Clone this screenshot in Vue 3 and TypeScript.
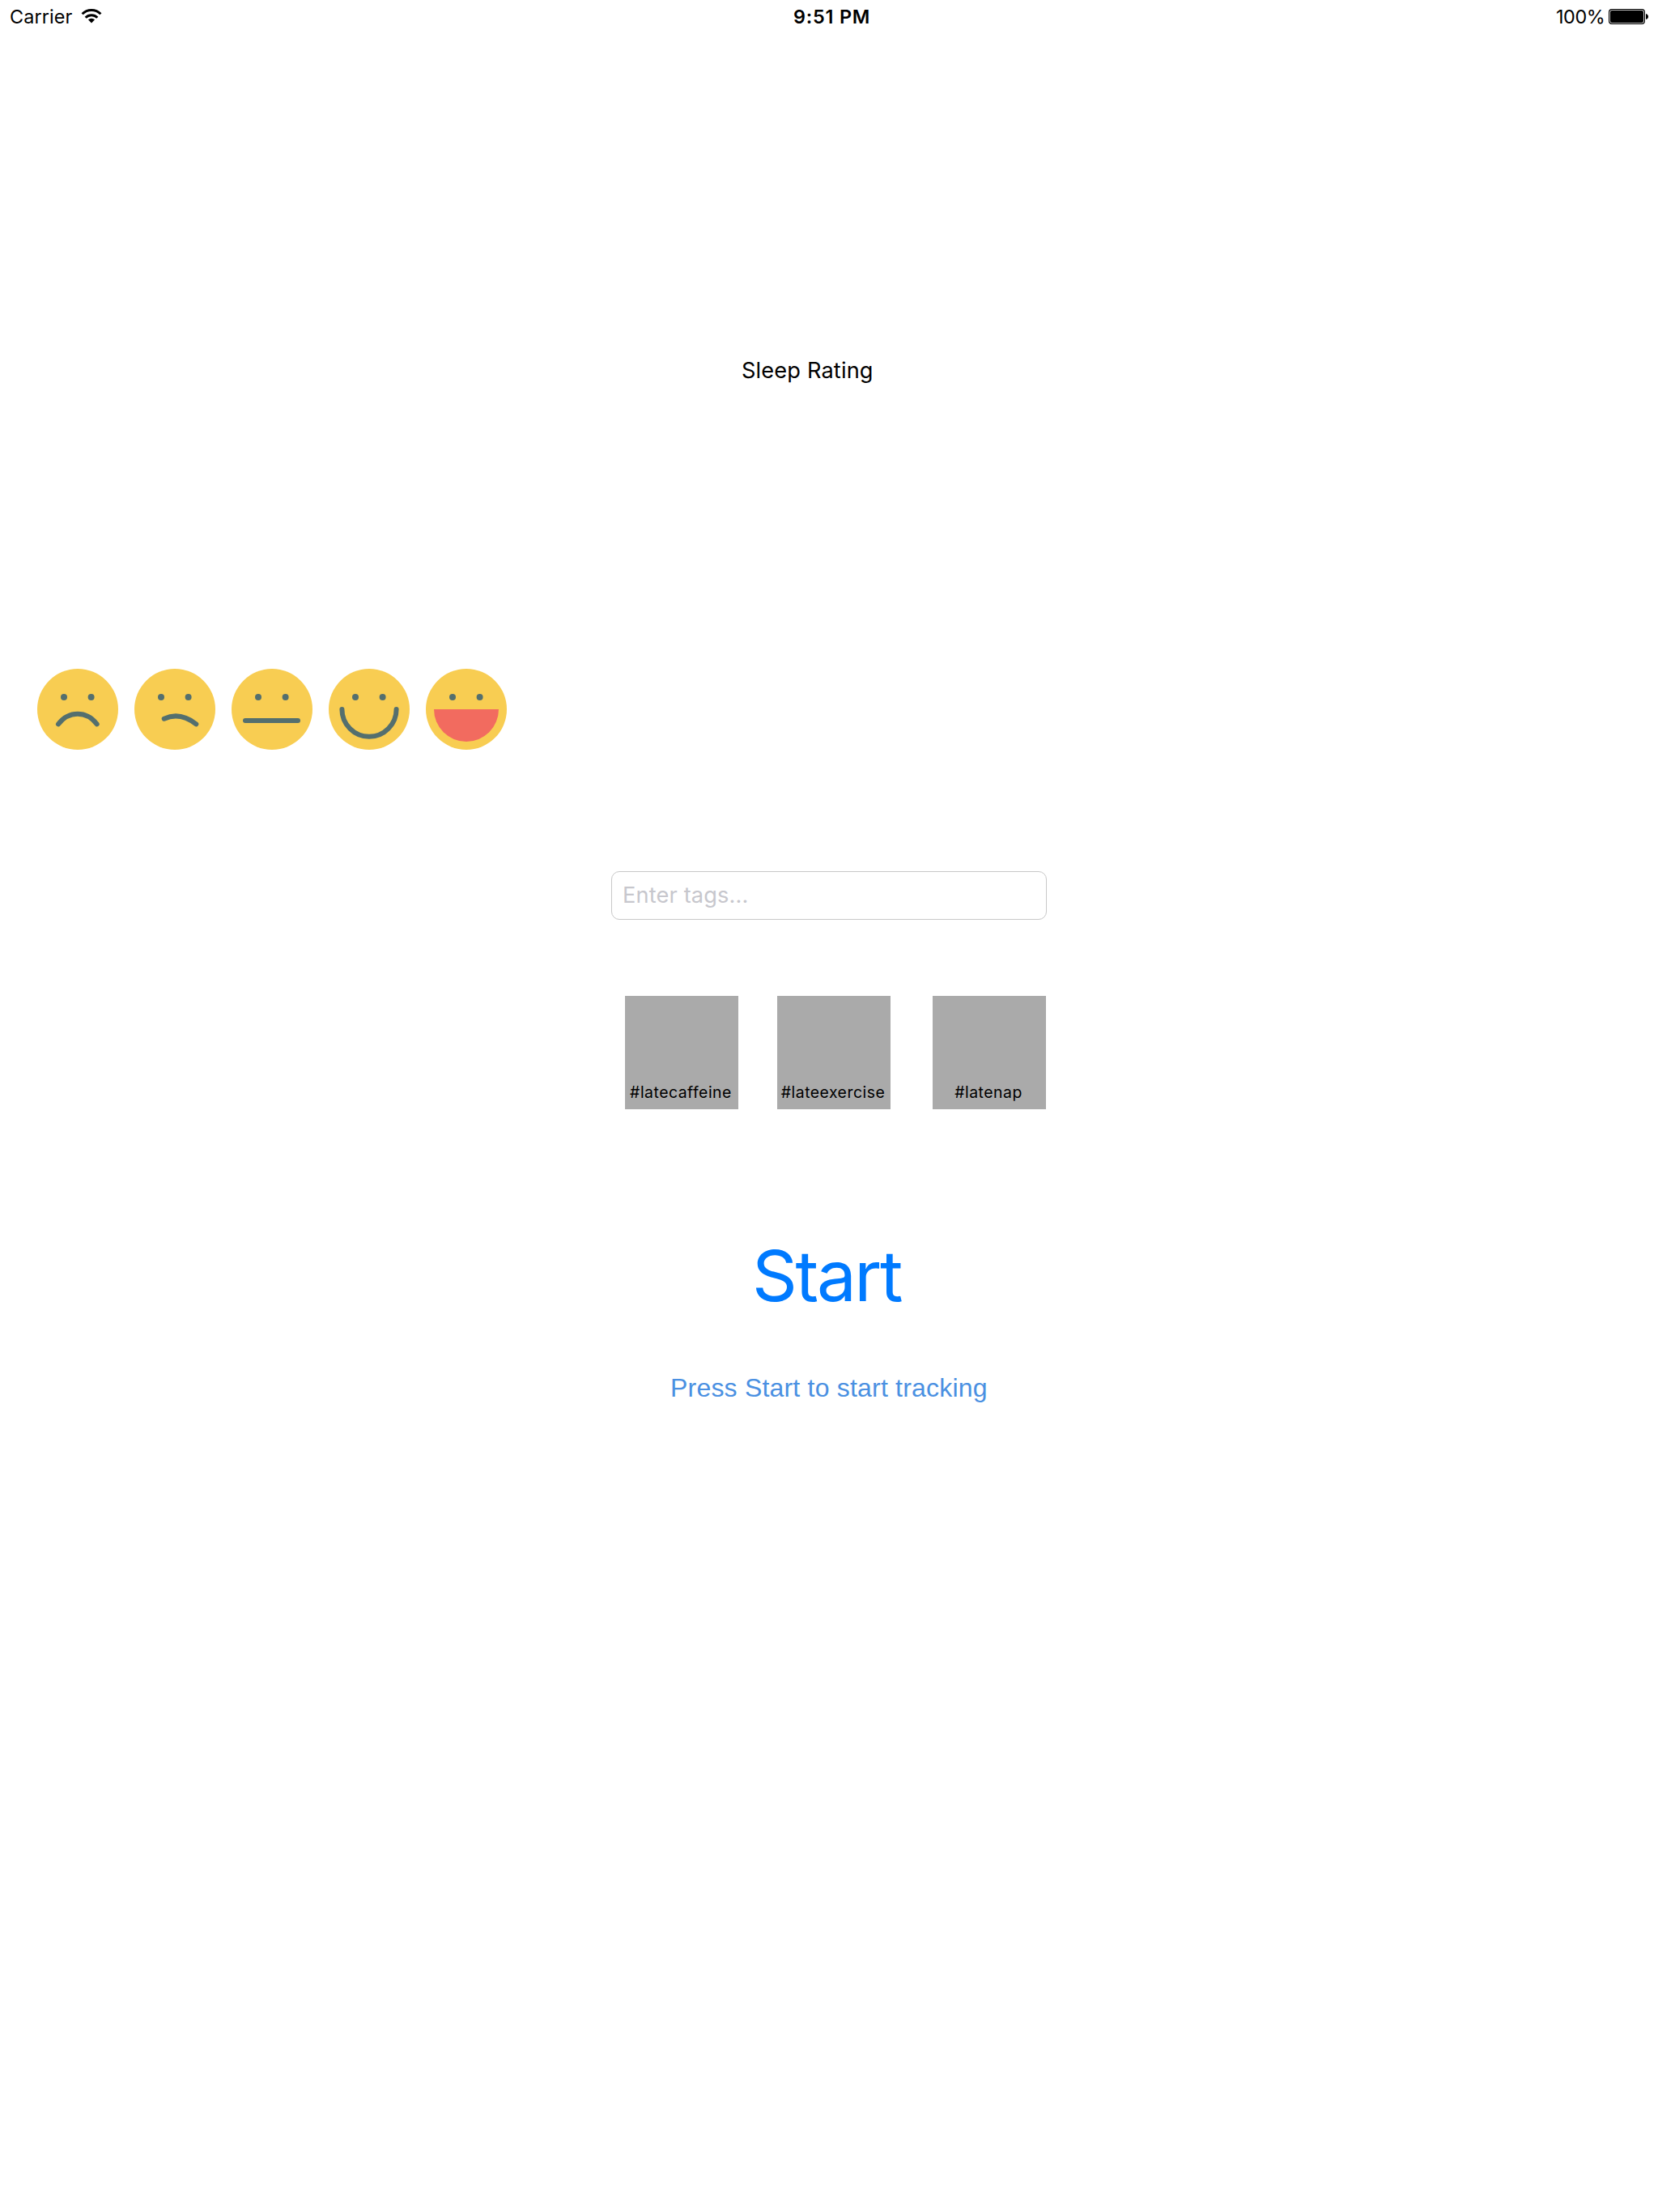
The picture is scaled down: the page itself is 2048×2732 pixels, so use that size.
<script setup lang="ts">
interface Face { name: string; mouth: string; open?: boolean }

const faces: Face[] = [
  { name: 'Very bad', mouth: 'M26 68.3C39 51.6 60.7 51.6 73.7 68.3' },
  { name: 'Bad', mouth: 'M36.7 61.7C49 56 63 58 76.3 68.3' },
  { name: 'Neutral', mouth: 'M17 63.9H82' },
  { name: 'Good', mouth: 'M16.4 50A33.6 33.8 0 0 0 83.6 50' },
  { name: 'Very good', mouth: 'M10 50H90A40 40 0 0 1 10 50Z', open: true },
]
const tags: string[] = ['#latecaffeine', '#lateexercise', '#latenap']
</script>

<template>
  <main class="screen">
    <header class="status">
      <div class="side">
        <span class="carrier">Carrier</span>
        <svg class="wifi" width="26" height="20" viewBox="0 0 26 20">
          <g fill="none" stroke="#000" stroke-width="3">
            <path d="M1.6 7.3A16.2 16.2 0 0 1 24.4 7.3" />
            <path d="M5.7 11.7A10.4 10.4 0 0 1 20.3 11.7" />
          </g>
          <path d="M13 18.6L8.9 14.3A6 6 0 0 1 17.1 14.3Z" />
        </svg>
      </div>
      <span class="clock">9:51 PM</span>
      <div class="side right">
        <span class="percent">100%</span>
        <svg class="battery" width="50" height="20" viewBox="0 0 50 20">
          <rect x=".6" y=".6" width="43.8" height="17.8" rx="3.4" fill="none" stroke="#000" stroke-width="1.2" />
          <rect x="2" y="2" width="41" height="15" rx="2" />
          <path d="M46 6Q49 7 49 9.5T46 13Z" />
        </svg>
      </div>
    </header>
    <h1 class="title">Sleep Rating</h1>
    <div class="faces">
      <svg v-for="face in faces" :key="face.name" width="100" height="100" viewBox="0 0 100 100" :aria-label="face.name">
        <circle cx="50" cy="50" r="50" fill="#f8cd52" />
        <circle cx="33" cy="35" r="4" fill="#546f6e" />
        <circle cx="66.6" cy="35" r="4" fill="#546f6e" />
        <path :d="face.mouth" :class="face.open ? 'open' : 'line'" />
      </svg>
    </div>
    <input class="field" type="text" placeholder="Enter tags..." />
    <div class="tags">
      <div v-for="tag in tags" :key="tag" class="tag"><span>{{ tag }}</span></div>
    </div>
    <button class="start" type="button">Start</button>
    <p class="hint">Press Start to start tracking</p>
  </main>
</template>

<style>
body { background: #fff; }
</style>

<style scoped>
.screen {
  box-sizing: border-box;
  display: flex;
  flex-direction: column;
  width: 2048px;
  height: 2732px;
  background: #fff;
  color: #000;
  font-family: Inter, "Liberation Sans", sans-serif;
  white-space: nowrap;
}
.status {
  display: flex;
  height: 40px;
  padding: 0 11px 0 12px;
  font-size: 23.4px;
  line-height: 41px;
}
.side { display: flex; width: 968px; }
.carrier { width: 87.5px; letter-spacing: 0.1px; }
.wifi { margin-top: 10px; }
.clock { width: 100px; font-weight: 600; letter-spacing: 0.8px; }
.right { flex: 1; width: auto; justify-content: flex-end; }
.percent { width: 65px; letter-spacing: -0.4px; }
.battery { margin-top: 11px; }
.title {
  margin: 398px 0 0 916px;
  font-size: 27.2px;
  font-weight: 400;
  line-height: 40px;
  letter-spacing: 0.15px;
}
.faces { display: flex; gap: 20px; margin: 348px 0 0 46px; }
.faces svg { display: block; }
.line { fill: none; stroke: #546f6e; stroke-width: 6; stroke-linecap: round; }
.open { fill: #f26b5f; }
.field {
  box-sizing: border-box;
  width: 538px;
  height: 60px;
  margin: 150px 0 0 755px;
  padding: 0 13px 2px;
  border: 1px solid #c8c8c8;
  border-radius: 10px;
  background: #fff;
  font: 27.2px Inter, sans-serif;
  letter-spacing: 0.15px;
}
.field::placeholder { color: #c7c7cd; opacity: 1; }
.tags { display: flex; gap: 48px; margin: 94px 0 0 772px; }
.tag {
  display: flex;
  flex-direction: column;
  justify-content: flex-end;
  width: 140px;
  height: 140px;
  background: #aaa;
  font-size: 19.4px;
  line-height: 30px;
  text-align: center;
}
.tag:last-child { margin-left: 4px; }
.tag span { padding: 0 2px 6px 0; letter-spacing: 0.5px; }
.start {
  align-self: flex-start;
  margin: 156px 0 0 929px;
  padding: 0;
  border: 0;
  background: none;
  color: #007aff;
  font: 400 87px/100px Inter, sans-serif;
  letter-spacing: -2.4px;
}
.hint {
  margin: 68px 0 0 828px;
  color: #4a90e2;
  font: 32px/40px "Liberation Sans", Arial, sans-serif;
  letter-spacing: 0.2px;
}
</style>
